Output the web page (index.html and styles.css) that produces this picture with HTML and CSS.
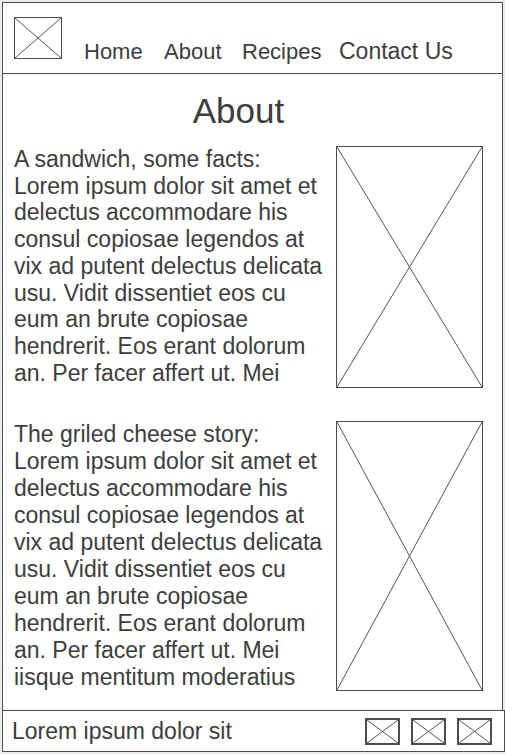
FILE: index.html
```html
<!DOCTYPE html>
<html lang="en">
<head>
<meta charset="utf-8">
<title>About</title>
<link rel="stylesheet" href="styles.css">
</head>
<body>
<div class="page">
  <div class="frame">
    <header class="header">
      <svg class="ph logo" viewBox="0 0 100 100" preserveAspectRatio="none"><line x1="0" y1="0" x2="100" y2="100"/><line x1="100" y1="0" x2="0" y2="100"/></svg>
      <nav class="nav">
        <a class="nav-item nav-home">Home</a>
        <a class="nav-item nav-about">About</a>
        <a class="nav-item nav-recipes">Recipes</a>
        <a class="nav-item nav-contact">Contact Us</a>
      </nav>
    </header>
    <h1 class="title">About</h1>
    <div class="rows">
      <p class="text">A sandwich, some facts:<br>Lorem ipsum dolor sit amet et delectus accommodare his consul copiosae legendos at vix ad putent delectus delicata usu. Vidit dissentiet eos cu eum an brute copiosae hendrerit. Eos erant dolorum an. Per facer affert ut. Mei</p>
      <svg class="ph img img-1" viewBox="0 0 100 100" preserveAspectRatio="none"><line x1="0" y1="0" x2="100" y2="100"/><line x1="100" y1="0" x2="0" y2="100"/></svg>
      <p class="text text-2">The griled cheese story:<br>Lorem ipsum dolor sit amet et delectus accommodare his consul copiosae legendos at vix ad putent delectus delicata usu. Vidit dissentiet eos cu eum an brute copiosae hendrerit. Eos erant dolorum an. Per facer affert ut. Mei iisque mentitum moderatius</p>
      <svg class="ph img img-2" viewBox="0 0 100 100" preserveAspectRatio="none"><line x1="0" y1="0" x2="100" y2="100"/><line x1="100" y1="0" x2="0" y2="100"/></svg>
    </div>
  </div>
  <footer class="footer">
    <span class="footer-text">Lorem ipsum dolor sit</span>
    <div class="icons">
      <svg class="ph icon" viewBox="0 0 100 100" preserveAspectRatio="none"><line x1="0" y1="0" x2="100" y2="100"/><line x1="100" y1="0" x2="0" y2="100"/></svg>
      <svg class="ph icon" viewBox="0 0 100 100" preserveAspectRatio="none"><line x1="0" y1="0" x2="100" y2="100"/><line x1="100" y1="0" x2="0" y2="100"/></svg>
      <svg class="ph icon" viewBox="0 0 100 100" preserveAspectRatio="none"><line x1="0" y1="0" x2="100" y2="100"/><line x1="100" y1="0" x2="0" y2="100"/></svg>
    </div>
  </footer>
</div>
</body>
</html>
```

FILE: styles.css
```css
html, body {
  margin: 0;
  padding: 0;
}
body {
  background: #ececec;
  font-family: "Liberation Sans", Arial, sans-serif;
  color: #3d3d3d;
  width: 505px;
  height: 754px;
  overflow: hidden;
}
.page {
  padding: 2px 0 0 2px;
}
.frame {
  width: 501px;
  height: 708px;
  box-sizing: border-box;
  background: #fff;
  border: 1px solid #4d4d4d;
  border-bottom: none;
}
.ph {
  display: block;
  box-sizing: border-box;
  border: 1px solid #4d4d4d;
  background: #fff;
  overflow: visible;
}
.ph line {
  stroke: #555;
  stroke-width: 1;
  vector-effect: non-scaling-stroke;
}
.header {
  box-sizing: border-box;
  height: 71px;
  border-bottom: 1px solid #4d4d4d;
  padding: 14px 0 0 11px;
  display: flex;
  align-items: baseline;
}
.logo {
  width: 48px;
  height: 42px;
}
.nav {
  display: flex;
  align-items: baseline;
  margin-left: 22px;
}
.nav-item {
  font-size: 22px;
  color: #3d3d3d;
  text-decoration: none;
}
.nav-home { width: 80px; }
.nav-about { width: 78px; }
.nav-recipes { width: 97px; }
.nav-contact { font-size: 23px; }
.title {
  margin: 17px 0 15px;
  padding-right: 28px;
  text-align: center;
  font-size: 35px;
  line-height: 40px;
  font-weight: normal;
}
.rows {
  display: grid;
  grid-template-columns: 316px 147px;
  column-gap: 6px;
  row-gap: 33px;
  padding-left: 11px;
  align-items: start;
}
.text {
  margin: 0;
  font-size: 23px;
  line-height: 26.7px;
}
.text-2 {
  line-height: 27px;
}
.img {
  width: 147px;
}
.img-1 { height: 242px; }
.img-2 { height: 270px; }
.footer {
  width: 503px;
  height: 42px;
  box-sizing: border-box;
  background: #fff;
  border: 1px solid #4d4d4d;
  display: flex;
  align-items: center;
  justify-content: space-between;
  padding: 0 12px 0 9px;
}
.footer-text {
  font-size: 23px;
}
.icons {
  display: flex;
  gap: 11px;
}
.icon {
  width: 35px;
  height: 27px;
  border: 2px solid #4d4d4d;
}
```
